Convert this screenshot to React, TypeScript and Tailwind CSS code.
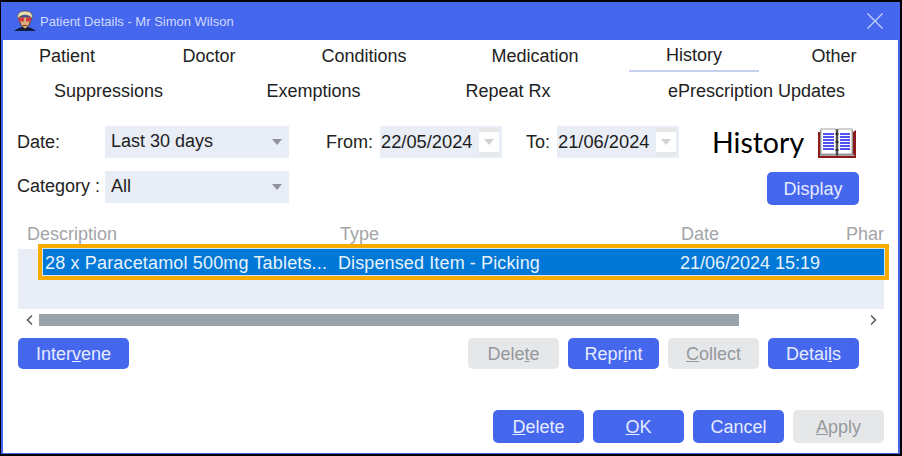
const Avatar = () => (
  <svg width="22" height="22" viewBox="0 0 22 22" className="mr-[4px] shrink-0">
    <path d="M0 21 L4 18.500 L8 17 L14 17 L18 18.500 L22 21 Z" fill="#101c40" />
    <path d="M5 7 Q5 15 11 19 Q17 15 17 7 Z" fill="#dcae7c" stroke="#3a2a18" strokeWidth="0.8" />
    <path d="M4 9 Q2 1 11 1 Q20 1 18 9 Q16 5 11 5 Q6 5 4 9 Z" fill="#e6dcb6" stroke="#4a3a20" strokeWidth="0.6" />
    <rect x="5" y="7.500" width="5" height="4" fill="#d03a40" />
    <rect x="12" y="7.500" width="5" height="4" fill="#d03a40" />
    <rect x="9" y="15" width="4" height="1" fill="#7a3020" />
  </svg>
);

const BookIcon = () => (
  <svg width="40" height="31" viewBox="0 0 40 31" className="shrink-0">
    <path d="M1 4 H36 L39 2 V30 H1 Z" fill="#8c1c1c" />
    <path d="M3 2 H19 L20 3 L21 2 H36 V26 L38 28 H3 Z" fill="#a8a8a8" />
    <rect x="4" y="1" width="15" height="25" fill="#fff" stroke="#666" strokeWidth="0.6" />
    <rect x="21" y="1" width="14" height="25" fill="#fff" stroke="#666" strokeWidth="0.6" />
    <path d="M6 6 H17 M6 9 H17 M6 12 H17 M6 15 H17 M6 18 H17 M6 21 H17 M23 6 H33 M23 9 H33 M23 12 H33 M23 15 H33 M23 18 H33 M23 21 H33" stroke="#1a1ae6" strokeWidth="1.600" />
    <path d="M20 1 V28" stroke="#222" strokeWidth="1.200" />
    <path d="M18.500 6 H21.500 M18.500 14 H21.500 M18.500 22 H21.500" stroke="#222" strokeWidth="1.600" />
  </svg>
);

const Caret = ({ className }: { className: string }) => (
  <span className={`h-0 w-0 border-x-[5.500px] border-t-[6px] border-x-transparent ${className}`} />
);

const Select = ({ value }: { value: string }) => (
  <div className="flex h-[32px] w-[184px] items-center justify-between bg-[#e9edf6] pl-[6px] pr-[7px] text-[#222]">
    <span className="-mt-[2px]">{value}</span>
    <Caret className="border-t-[#8f939c]" />
  </div>
);

const DateField = ({ value }: { value: string }) => (
  <div className="flex h-[32px] w-[122px] items-center bg-[#e9edf6] pl-[1px] text-[#222]">
    <span className="w-[98px] text-[18.3px] text-[#1c1c1c]">{value}</span>
    <span className="flex h-[28px] w-[20px] items-center justify-center border-y-[4px] border-[#e5e7e9] bg-white">
      <Caret className="border-t-[#cfd1d4]" />
    </span>
  </div>
);

const Button = ({ children, disabled, className = "h-[31px] w-[91px]" }: { children: React.ReactNode; disabled?: boolean; className?: string }) => (
  <button
    type="button"
    className={`rounded-[5px] text-center ${className} ${disabled ? "bg-[#e5e7e9] text-[#96989c]" : "bg-[#4567ee] text-[#e6ebff]"}`}
  >
    {children}
  </button>
);

const App = () => {
  return (
    <div className="h-[456px] w-[902px] overflow-hidden border-b-2 border-l border-r-2 border-t-2 border-black bg-white font-['Liberation_Sans',Arial,sans-serif] text-[18px] leading-none text-[#222]">
      <div className="flex h-[452px] w-[899px] flex-col border-x-2 border-b border-[#4567ee]">
        <div className="flex h-[38px] shrink-0 items-center bg-[#4567ee] pl-[11px] pr-[15px] text-[13px] text-[#cfdaff]">
          <Avatar />
          <span>Patient Details - Mr Simon Wilson</span>
          <svg width="16" height="16" viewBox="0 0 16 16" className="ml-auto">
            <path d="M0.500 0.500 L15.500 15.500 M15.500 0.500 L0.500 15.500" stroke="#c5d2fb" strokeWidth="1.300" />
          </svg>
        </div>

        <div className="flex h-[33px] shrink-0 items-center pb-[2px] text-center">
          <span className="w-[128px] shrink-0">Patient</span>
          <span className="w-[156px] shrink-0">Doctor</span>
          <span className="w-[154px] shrink-0">Conditions</span>
          <span className="w-[188px] shrink-0">Medication</span>
          <span className="h-[32px] w-[130px] shrink-0 self-start border-b-2 border-[#c6d0ef] pt-[5px] leading-[21px]">History</span>
          <span className="ml-[25px] w-[100px] shrink-0">Other</span>
        </div>
        <div className="mt-[2px] flex h-[33px] shrink-0 items-center whitespace-nowrap pb-[2px] text-center">
          <span className="ml-[51px] w-[109px] shrink-0">Suppressions</span>
          <span className="ml-[102px] w-[97px] shrink-0">Exemptions</span>
          <span className="ml-[102px] w-[88px] shrink-0">Repeat Rx</span>
          <span className="ml-[115px] w-[179px] shrink-0">ePrescription Updates</span>
        </div>

        <div className="mt-[18px] flex h-[32px] shrink-0 items-center pl-[14px]">
          <span className="w-[88px]">Date:</span>
          <Select value="Last 30 days" />
          <span className="ml-[37px] w-[54px]">From:</span>
          <DateField value="22/05/2024" />
          <span className="ml-[24px] w-[31px]">To:</span>
          <DateField value="21/06/2024" />
          <span className="ml-[33px] font-['Lato',sans-serif] text-[28.5px] text-black">History</span>
          <span className="ml-[13px] mt-[2px]"><BookIcon /></span>
        </div>

        <div className="mt-[13px] flex h-[34px] shrink-0 items-start pl-[14px]">
          <span className="mt-[6px] w-[88px]">Category :</span>
          <Select value="All" />
          <span className="ml-auto mr-[39px] mt-[1px]"><Button className="h-[33px] w-[92px]">Display</Button></span>
        </div>

        <div className="relative ml-[15px] mr-[14px] mt-[18px] shrink-0">
          <div className="flex h-[26px] items-center pb-[4px] text-[#a3a5a8]">
            <span className="ml-[9px] w-[313px]">Description</span>
            <span className="w-[341px]">Type</span>
            <span className="w-[165px]">Date</span>
            <span className="w-[38px] whitespace-nowrap">Phar</span>
          </div>
          <div className="h-[60px] bg-[#e9edf6]">
            <div className="relative -top-[1px] ml-[24px] flex h-[28px] w-[843px] items-center border border-[#cfe3fa] bg-[#0078d7] pt-[2px] text-[#e8f2fb]">
              <span className="ml-[2px] w-[293px] whitespace-nowrap tracking-[0.16px]">28 x Paracetamol 500mg Tablets...</span>
              <span className="w-[342px] tracking-[0.12px]">Dispensed Item - Picking</span>
              <span>21/06/2024 15:19</span>
            </div>
          </div>
          <div className="absolute left-[20px] top-[21px] h-[36px] w-[851px] border-4 border-[#f9ab00]" />
          <div className="flex h-[21px] items-center">
            <svg width="21" height="12" viewBox="0 0 21 12" className="shrink-0">
              <path d="M14 1.500 L9.500 6 L14 10.500" fill="none" stroke="#55595e" strokeWidth="1.500" />
            </svg>
            <div className="h-[12px] w-[700px] bg-[#9ca3a8]" />
            <svg width="12" height="12" viewBox="0 0 12 12" className="ml-auto mr-[5px] shrink-0">
              <path d="M4 1.500 L8.500 6 L4 10.500" fill="none" stroke="#55595e" strokeWidth="1.500" />
            </svg>
          </div>
        </div>

        <div className="mt-[8px] flex shrink-0 gap-[9px] pl-[15px]">
          <Button className="mr-[330px] h-[31px] w-[111px]">Inter<u>v</u>ene</Button>
          <Button disabled>Dele<u>t</u>e</Button>
          <Button>Repr<u>i</u>nt</Button>
          <Button disabled><u>C</u>ollect</Button>
          <Button>Detai<u>l</u>s</Button>
        </div>

        <div className="mt-[41px] flex shrink-0 justify-end gap-[9px] pr-[14px]">
          <Button className="h-[33px] w-[91px]"><u>D</u>elete</Button>
          <Button className="h-[33px] w-[91px]"><u>O</u>K</Button>
          <Button className="h-[33px] w-[91px]">Cancel</Button>
          <Button disabled className="h-[33px] w-[91px]"><u>A</u>pply</Button>
        </div>
      </div>
    </div>
  );
};

export default App;
